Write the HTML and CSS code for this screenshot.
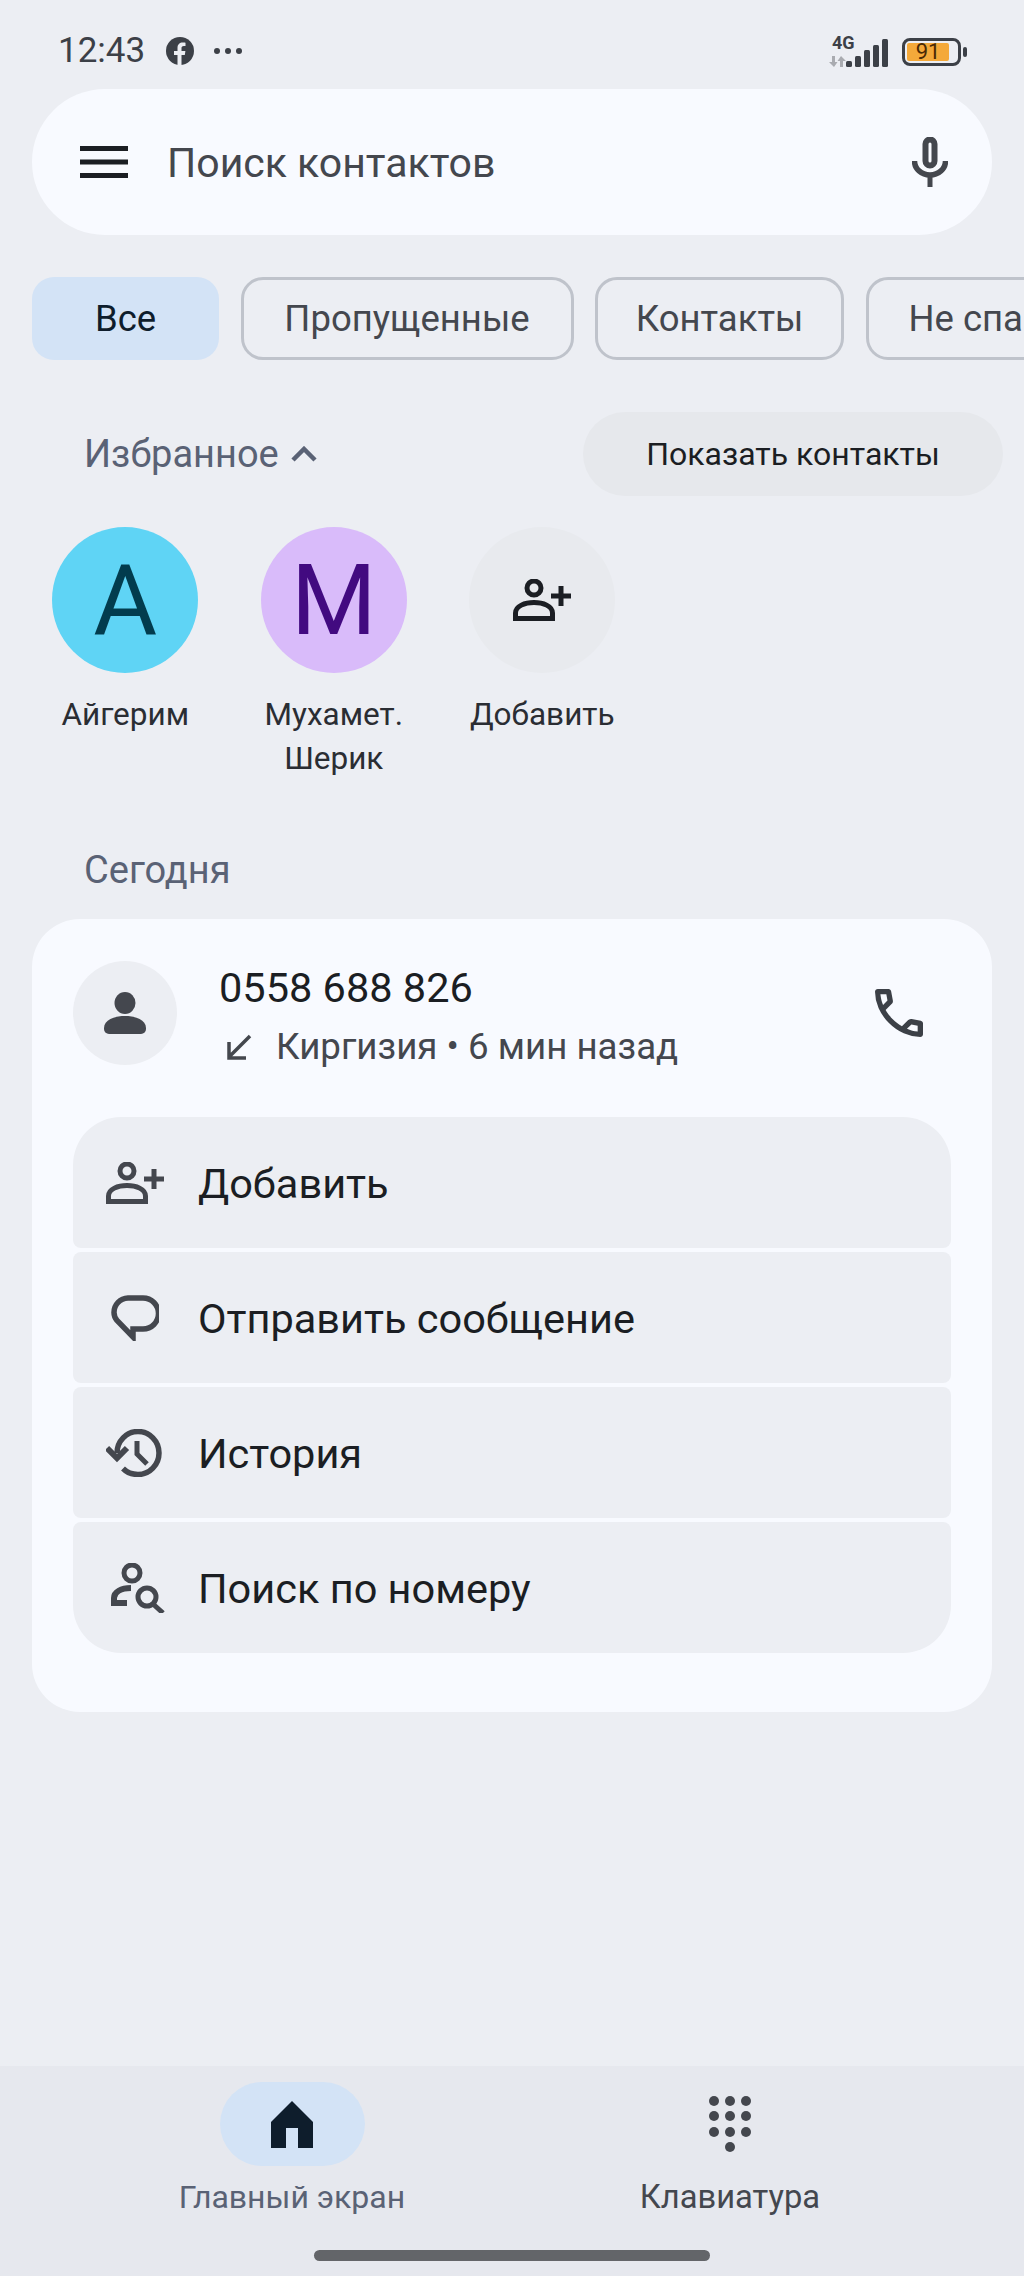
FILE: index.html
```html
<!DOCTYPE html>
<html lang="ru">
<head>
  <meta charset="UTF-8">
  <meta name="viewport" content="width=device-width, initial-scale=1.0">
  <link rel="stylesheet" href="styles.css">
  <title>Телефон</title>
</head>
<body>
  <div class="page">
    <div class="status-bar">
      <div class="status-left">
        <span class="time">12:43</span>
        <svg class="fb-icon" width="28" height="28" viewBox="0 0 28 28">
          <circle cx="14" cy="14" r="14" fill="#3c4047"/>
          <path d="M11.5 28V18H8v-4h3.5v-3c0-3.6 2.1-5.5 5.3-5.5 1.5 0 2.7.2 2.7.2v3.4h-1.7c-1.8 0-2.3 1-2.3 2.1V14h3.9l-.6 4h-3.3v10z" fill="#eceef3"/>
        </svg>
        <svg class="more-icon" width="30" height="8" viewBox="0 0 30 8">
          <circle cx="4" cy="4" r="3" fill="#3c4047"/>
          <circle cx="15" cy="4" r="3" fill="#3c4047"/>
          <circle cx="26" cy="4" r="3" fill="#3c4047"/>
        </svg>
      </div>
      <div class="status-right">
        <div class="signal">
          <span class="net-label">4G</span>
          <svg class="net-arrows" width="17" height="11" viewBox="0 0 17 11">
            <path d="M6 0v6h2.500L5 11 0 6h3V0zM11 11V5H8.500L12 0l5 5h-3v6z" fill="#a9abb0"/>
          </svg>
          <svg class="bars" width="42" height="28" viewBox="0 0 42 28">
            <rect x="0" y="22" width="6" height="6" rx="1.500" fill="#3c4047"/>
            <rect x="9" y="17" width="6" height="11" rx="1.500" fill="#3c4047"/>
            <rect x="18" y="11" width="6" height="17" rx="1.500" fill="#3c4047"/>
            <rect x="27" y="6" width="6" height="22" rx="1.500" fill="#3c4047"/>
            <rect x="36" y="0" width="6" height="28" rx="1.500" fill="#3c4047"/>
          </svg>
        </div>
        <div class="battery">
          <div class="battery-body">
            <div class="battery-fill">91</div>
          </div>
          <div class="battery-nub"></div>
        </div>
      </div>
    </div>

    <div class="search-bar">
      <svg class="menu-icon" width="48" height="32" viewBox="0 0 48 32">
        <rect y="0" width="48" height="5" fill="#1b1e23"/>
        <rect y="13.500" width="48" height="5" fill="#1b1e23"/>
        <rect y="27" width="48" height="5" fill="#1b1e23"/>
      </svg>
      <span class="search-text">Поиск контактов</span>
      <svg class="mic-icon" width="36" height="50" viewBox="0 0 36 50">
        <rect x="13.500" y="2.500" width="9" height="26" rx="4.500" fill="none" stroke="#44474e" stroke-width="6"/>
        <path d="M2.500 24a15.500 14 0 0 0 31 0" fill="none" stroke="#44474e" stroke-width="5.500"/>
        <rect x="15.500" y="37" width="5" height="13" fill="#44474e"/>
      </svg>
    </div>

    <div class="chips">
      <div class="chip chip-active">Все</div>
      <div class="chip chip-missed">Пропущенные</div>
      <div class="chip chip-contacts">Контакты</div>
      <div class="chip">Не спам</div>
    </div>

    <div class="fav-head">
      <div class="fav-title">
        <span>Избранное</span>
        <svg width="26" height="16" viewBox="0 0 26 16">
          <path d="M2 14 13 3l11 11" fill="none" stroke="#5a6275" stroke-width="4.500"/>
        </svg>
      </div>
      <div class="show-btn">Показать контакты</div>
    </div>

    <div class="favorites">
      <div class="fav">
        <div class="fav-avatar av-blue">А</div>
        <div class="fav-name">Айгерим</div>
      </div>
      <div class="fav">
        <div class="fav-avatar av-purple">М</div>
        <div class="fav-name">Мухамет.<br>Шерик</div>
      </div>
      <div class="fav">
        <div class="fav-avatar av-grey">
          <svg width="58" height="42" viewBox="0 0 58 42">
            <circle cx="21" cy="9" r="7" fill="none" stroke="#1b1e23" stroke-width="5"/>
            <path d="M2.500 39.500V34c0-7 9.500-10.500 18.500-10.500S39.500 27 39.500 34v5.500z" fill="none" stroke="#1b1e23" stroke-width="5"/>
            <path d="M48 7v20M38 17h20" fill="none" stroke="#1b1e23" stroke-width="5"/>
          </svg>
        </div>
        <div class="fav-name">Добавить</div>
      </div>
    </div>

    <div class="day-label">Сегодня</div>

    <div class="call-card">
      <div class="call-head">
        <div class="call-avatar">
          <svg width="42" height="42" viewBox="0 0 42 42">
            <ellipse cx="21" cy="11" rx="10.500" ry="11" fill="#44474e"/>
            <path d="M0 36c0-8 10-12 21-12s21 4 21 12v1a5 5 0 0 1-5 5H5a5 5 0 0 1-5-5z" fill="#44474e"/>
          </svg>
        </div>
        <div class="call-info">
          <div class="call-number">0558 688 826</div>
          <div class="call-meta">
            <svg width="26" height="26" viewBox="0 0 26 26">
              <path d="M24 2 4 22M3 8v16h17" fill="none" stroke="#44474e" stroke-width="3.500"/>
            </svg>
            <span>Киргизия • 6 мин назад</span>
          </div>
        </div>
        <svg class="call-icon" width="48" height="48" viewBox="3 3 18 18">
          <path d="M19.950 21q-3.125 0-6.175-1.363-3.050-1.362-5.550-3.862-2.500-2.500-3.862-5.550Q3 7.175 3 4.050q0-.45.3-.75t.75-.3H8.100q.35 0 .625.238t.325.562l.65 3.500q.05.4-.025.675T9.400 8.450L6.975 10.900q.5.925 1.187 1.787.688.863 1.513 1.663.775.775 1.625 1.438.85.662 1.800 1.212l2.350-2.350q.225-.225.588-.338.362-.112.712-.062l3.450.7q.35.1.575.363Q21 15.575 21 15.900v4.050q0 .45-.3.75t-.75.3ZM6.025 9l1.650-1.650L7.250 5H5.025q.125 1.025.35 2.025.225 1 .65 1.975ZM14.975 17.950q.975.425 1.988.675 1.012.25 2.037.325v-2.200l-2.350-.475Z" fill="#3c4047"/>
        </svg>
      </div>

      <div class="actions">
        <div class="action">
          <div class="action-icon">
            <svg width="58" height="42" viewBox="0 0 58 42">
              <circle cx="21" cy="9" r="7" fill="none" stroke="#44474e" stroke-width="5"/>
              <path d="M2.500 39.500V34c0-7 9.500-10.500 18.500-10.500S39.500 27 39.500 34v5.500z" fill="none" stroke="#44474e" stroke-width="5"/>
              <path d="M48 7v20M38 17h20" fill="none" stroke="#44474e" stroke-width="5"/>
            </svg>
          </div>
          <span>Добавить</span>
        </div>
        <div class="action">
          <div class="action-icon icon-msg">
            <svg width="48" height="46" viewBox="0 0 48 46">
              <path d="M22 34h10a14.500 14.500 0 0 0 0-31H17A14.500 14.500 0 0 0 3 17.500c0 3 1 5.500 3 8L22 42z" fill="none" stroke="#44474e" stroke-width="5.500"/>
            </svg>
          </div>
          <span>Отправить сообщение</span>
        </div>
        <div class="action">
          <div class="action-icon">
            <svg width="56" height="48" viewBox="0 0 56 48">
              <path d="M11 24A21 21.500 0 1 1 32 45.500c-6 0-11-2-15-6" fill="none" stroke="#44474e" stroke-width="5.500"/>
              <path d="M1 19l10 10 10-10" fill="none" stroke="#44474e" stroke-width="6"/>
              <path d="M31 12v13l10 10" fill="none" stroke="#44474e" stroke-width="5"/>
            </svg>
          </div>
          <span>История</span>
        </div>
        <div class="action">
          <div class="action-icon icon-search">
            <svg width="54" height="50" viewBox="0 0 54 50">
              <circle cx="21" cy="10" r="8" fill="none" stroke="#44474e" stroke-width="5"/>
              <path d="M20 25C10 25 3 29 3 35v5h13" fill="none" stroke="#44474e" stroke-width="6"/>
              <circle cx="36" cy="34" r="9" fill="none" stroke="#44474e" stroke-width="5"/>
              <path d="M42 41l10 9" fill="none" stroke="#44474e" stroke-width="5"/>
            </svg>
          </div>
          <span>Поиск по номеру</span>
        </div>
      </div>
    </div>

    <div class="bottom-nav">
      <div class="nav-tabs">
        <div class="nav-tab">
          <div class="nav-pill">
            <svg width="42" height="47" viewBox="0 0 42 47">
              <path d="M21 0 42 21v26H27V27H15v20H0V21z" fill="#0e1d2c"/>
            </svg>
          </div>
          <div class="nav-label">Главный экран</div>
        </div>
        <div class="nav-tab">
          <div class="nav-pill pill-plain">
            <svg width="44" height="58" viewBox="0 0 44 58">
              <circle cx="6" cy="6" r="5" fill="#44474e"/>
              <circle cx="22" cy="6" r="5" fill="#44474e"/>
              <circle cx="38" cy="6" r="5" fill="#44474e"/>
              <circle cx="6" cy="21" r="5" fill="#44474e"/>
              <circle cx="22" cy="21" r="5" fill="#44474e"/>
              <circle cx="38" cy="21" r="5" fill="#44474e"/>
              <circle cx="6" cy="37" r="5" fill="#44474e"/>
              <circle cx="22" cy="37" r="5" fill="#44474e"/>
              <circle cx="38" cy="37" r="5" fill="#44474e"/>
              <circle cx="22" cy="52" r="5" fill="#44474e"/>
            </svg>
          </div>
          <div class="nav-label label-dark">Клавиатура</div>
        </div>
      </div>
      <div class="gesture-bar"></div>
    </div>
  </div>
</body>
</html>
```

FILE: styles.css
```css
body {
  font-family: 'Roboto', 'Noto Sans', sans-serif;
  background-color: #eceef3;
  margin: 0;
  padding: 0;
}

.page {
  width: 1024px;
  height: 2276px;
  display: flex;
  flex-direction: column;
  overflow: hidden;
}

/* status bar */
.status-bar {
  height: 76px;
  padding: 13px 57px 0 58px;
  display: flex;
  justify-content: space-between;
  align-items: center;
  color: #3c4047;
}

.status-left {
  display: flex;
  align-items: center;
}

.time {
  font-size: 35px;
  line-height: 40px;
  width: 108px;
}

.more-icon {
  margin-left: 19px;
}

.status-right {
  display: flex;
  align-items: center;
  gap: 14px;
  padding-top: 2px;
}

.signal {
  position: relative;
  width: 59px;
  height: 30px;
}

.net-label {
  position: absolute;
  left: 3px;
  top: -3px;
  font-size: 18px;
  line-height: 18px;
  font-weight: 700;
}

.net-arrows {
  position: absolute;
  left: 0;
  bottom: 0;
}

.bars {
  position: absolute;
  right: 0;
  bottom: 0;
}

.battery {
  display: flex;
  align-items: center;
  gap: 2px;
}

.battery-body {
  width: 59px;
  height: 28px;
  box-sizing: border-box;
  border: 3.5px solid #3c4047;
  border-radius: 8px;
  padding: 2px;
}

.battery-fill {
  width: 42px;
  height: 100%;
  background-color: #f4a93a;
  border-radius: 2px;
  font-size: 22px;
  line-height: 18px;
  text-align: center;
  color: #4a2a05;
}

.battery-nub {
  width: 4px;
  height: 10px;
  background-color: #3c4047;
  border-radius: 2px;
}

/* search */
.search-bar {
  margin: 0 32px;
  height: 146px;
  padding: 0 44px 0 48px;
  flex-shrink: 0;
  display: flex;
  align-items: center;
  background-color: #f8faff;
  border-radius: 73px;
}

.search-text {
  flex: 1;
  margin-left: 39px;
  padding-top: 2px;
  font-size: 41px;
  color: #44474e;
}

/* filter chips */
.chips {
  margin-top: 42px;
  padding-left: 32px;
  display: flex;
  gap: 21.500px;
  flex-shrink: 0;
}

.chip {
  height: 83px;
  box-sizing: border-box;
  padding: 0 40px;
  display: flex;
  align-items: center;
  justify-content: center;
  flex-shrink: 0;
  border: 3px solid #bfc3cb;
  border-radius: 22px;
  font-size: 36.500px;
  color: #44474e;
}

.chip-active {
  width: 187px;
  padding: 0;
  border-color: transparent;
  background-color: #d3e3f6;
  color: #0e1d2c;
}

.chip-missed {
  width: 333px;
  padding: 0;
}

.chip-contacts {
  width: 249px;
  padding: 0;
}

/* favorites */
.fav-head {
  margin: 52px 21px 0 84px;
  height: 84px;
  display: flex;
  align-items: center;
  justify-content: space-between;
  flex-shrink: 0;
}

.fav-title {
  display: flex;
  align-items: center;
  gap: 12px;
  font-size: 38px;
  color: #5a6275;
}

.show-btn {
  width: 420px;
  height: 84px;
  display: flex;
  align-items: center;
  justify-content: center;
  background-color: #e6e8ec;
  border-radius: 42px;
  font-size: 32px;
  color: #1b1e23;
}

.favorites {
  margin-top: 31px;
  padding-left: 21px;
  display: grid;
  grid-template-columns: repeat(3, 208.5px);
  height: 254px;
  flex-shrink: 0;
}

.fav {
  display: flex;
  flex-direction: column;
  align-items: center;
}

.fav-avatar {
  width: 146px;
  height: 146px;
  border-radius: 50%;
  display: flex;
  align-items: center;
  justify-content: center;
  font-size: 98px;
}

.av-blue {
  background-color: #5fd4f5;
  color: #023c4e;
}

.av-purple {
  background-color: #d9bbfa;
  color: #420a80;
}

.av-grey {
  background-color: #e8eaee;
}

.fav-name {
  margin-top: 20px;
  font-size: 31.5px;
  line-height: 44px;
  text-align: center;
  color: #2a2d33;
}

.day-label {
  margin: 64px 0 0 84px;
  height: 50px;
  line-height: 50px;
  font-size: 38px;
  color: #5a6275;
  flex-shrink: 0;
}

/* call card */
.call-card {
  margin: 24px 32px 0;
  padding: 42px 41px 59px;
  background-color: #f8faff;
  border-radius: 48px;
  flex-shrink: 0;
}

.call-head {
  height: 104px;
  display: flex;
  align-items: center;
}

.call-avatar {
  width: 104px;
  height: 104px;
  border-radius: 50%;
  background-color: #eceef3;
  display: flex;
  align-items: center;
  justify-content: center;
}

.call-info {
  flex: 1;
  margin-left: 42px;
}

.call-number {
  font-size: 41.5px;
  line-height: 48px;
  color: #1b1e23;
  margin-top: 6px;
}

.call-meta {
  margin-top: 13px;
  padding-left: 7px;
  display: flex;
  align-items: center;
  gap: 24px;
  font-size: 36.7px;
  line-height: 44px;
  color: #44474e;
}

.call-icon {
  margin-right: 28px;
}

.actions {
  margin-top: 52px;
  display: flex;
  flex-direction: column;
  gap: 4px;
}

.action {
  height: 131px;
  box-sizing: border-box;
  padding-top: 1px;
  display: flex;
  align-items: center;
  background-color: #eceef3;
  border-radius: 8px;
  font-size: 41.5px;
  color: #1b1e23;
}

.action:first-child {
  border-radius: 48px 48px 8px 8px;
}

.action:last-child {
  border-radius: 8px 8px 48px 48px;
}

.action-icon {
  width: 125px;
  padding-left: 33px;
  box-sizing: border-box;
  display: flex;
  align-items: center;
  flex-shrink: 0;
}

.icon-msg {
  padding-left: 38px;
}

.icon-search {
  padding-left: 38px;
}

/* bottom nav */
.bottom-nav {
  margin-top: auto;
  height: 210px;
  background-color: #e6e8ee;
  position: relative;
  flex-shrink: 0;
}

.nav-tabs {
  display: grid;
  grid-template-columns: 292px 146px 292px;
  justify-content: start;
  padding: 16px 0 0 0;
  margin-left: 146px;
}

.nav-tab {
  display: flex;
  flex-direction: column;
  align-items: center;
}

.nav-tab:nth-child(2) {
  grid-column: 3;
}

.nav-pill {
  width: 145px;
  height: 84px;
  border-radius: 42px;
  background-color: #d3e3f6;
  display: flex;
  align-items: center;
  justify-content: center;
}

.pill-plain {
  background-color: transparent;
}

.nav-label {
  margin-top: 11px;
  font-size: 32px;
  line-height: 40px;
  color: #5a6275;
}

.label-dark {
  font-size: 32.700px;
  color: #44474e;
}

.gesture-bar {
  position: absolute;
  left: 314px;
  bottom: 15px;
  width: 396px;
  height: 11px;
  border-radius: 6px;
  background-color: #636569;
}
```
